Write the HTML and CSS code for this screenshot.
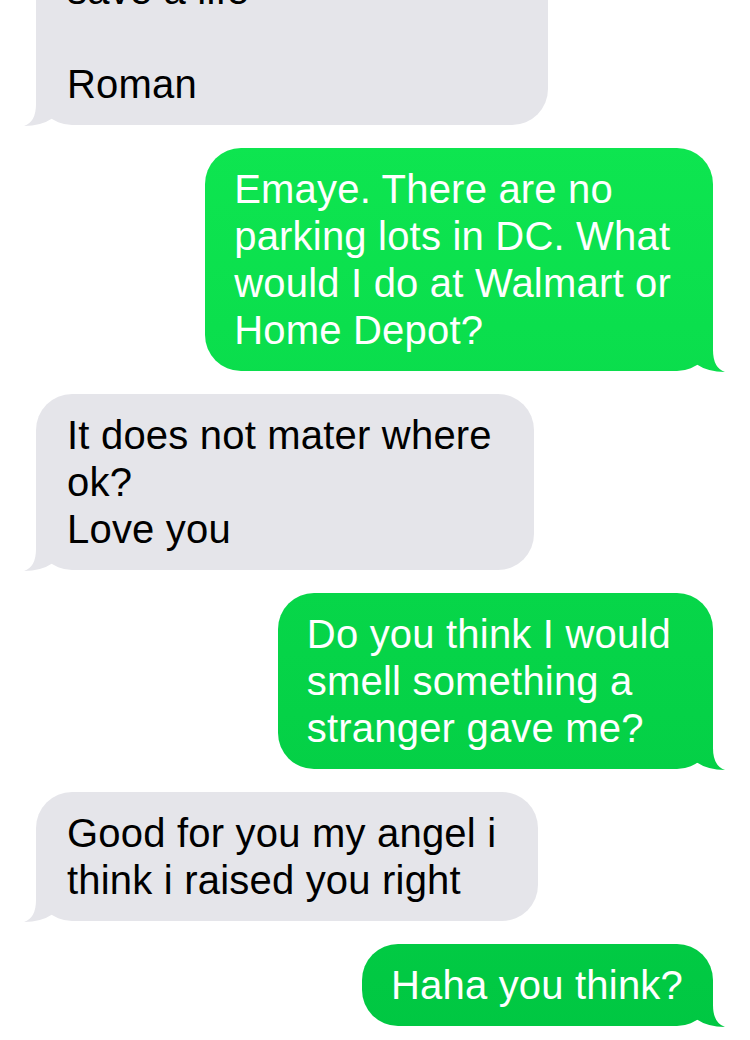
FILE: index.html
```html
<!DOCTYPE html>
<html lang="en">
<head>
<meta charset="utf-8">
<title>Messages</title>
<link rel="stylesheet" href="styles.css">
</head>
<body>
<div class="thread">
  <div class="row row-in">
    <div class="bubble bubble-in bubble-first">save a life<br><br>Roman</div>
  </div>
  <div class="row row-out">
    <div class="bubble bubble-out wrapped">Emaye. There are no<br>parking lots in DC. What<br>would I do at Walmart or<br>Home Depot?</div>
  </div>
  <div class="row row-in">
    <div class="bubble bubble-in wrapped">It does not mater where<br>ok?<br>Love you</div>
  </div>
  <div class="row row-out">
    <div class="bubble bubble-out wrapped">Do you think I would<br>smell something a<br>stranger gave me?</div>
  </div>
  <div class="row row-in">
    <div class="bubble bubble-in wrapped">Good for you my angel i<br>think i raised you right</div>
  </div>
  <div class="row row-out">
    <div class="bubble bubble-out">Haha you think?</div>
  </div>
</div>
</body>
</html>
```

FILE: styles.css
```css
html, body {
  margin: 0;
  padding: 0;
  background: #ffffff;
}

body {
  width: 750px;
  height: 1040px;
  overflow: hidden;
  font-family: "Liberation Sans", Arial, Helvetica, sans-serif;
  font-size: 40px;
  line-height: 47px;
  letter-spacing: 0.2px;
}

.thread {
  display: flex;
  flex-direction: column;
  gap: 23px;
  padding: 0 37px 0 36px;
  margin-top: -51px;
}

.row {
  display: flex;
}

.row-in {
  justify-content: flex-start;
}

.row-out {
  justify-content: flex-end;
}

.bubble {
  position: relative;
  padding: 18px 30px 17px 31px;
  border-radius: 36px;
  white-space: nowrap;
}

.bubble.wrapped {
  padding-right: 42px;
}

.bubble-in {
  background: #e5e5ea;
  color: #000000;
}

.bubble-out {
  background: linear-gradient(to bottom, #10ea52 0px, #00c742 1040px) fixed;
  color: #ffffff;
  padding-left: 29px;
}

.bubble-first {
  width: 512px;
  box-sizing: border-box;
}

.bubble::after {
  content: "";
  position: absolute;
  bottom: -1px;
  width: 30px;
  height: 44px;
  background: inherit;
}

.bubble-in::after {
  left: -12px;
  clip-path: path("M12,0 L12,22 Q12,40 0,44 Q17,44 29,36 L29,0 Z");
}

.bubble-out::after {
  right: -12px;
  clip-path: path("M18,0 L18,22 Q18,40 30,44 Q13,44 1,36 L1,0 Z");
}
```
